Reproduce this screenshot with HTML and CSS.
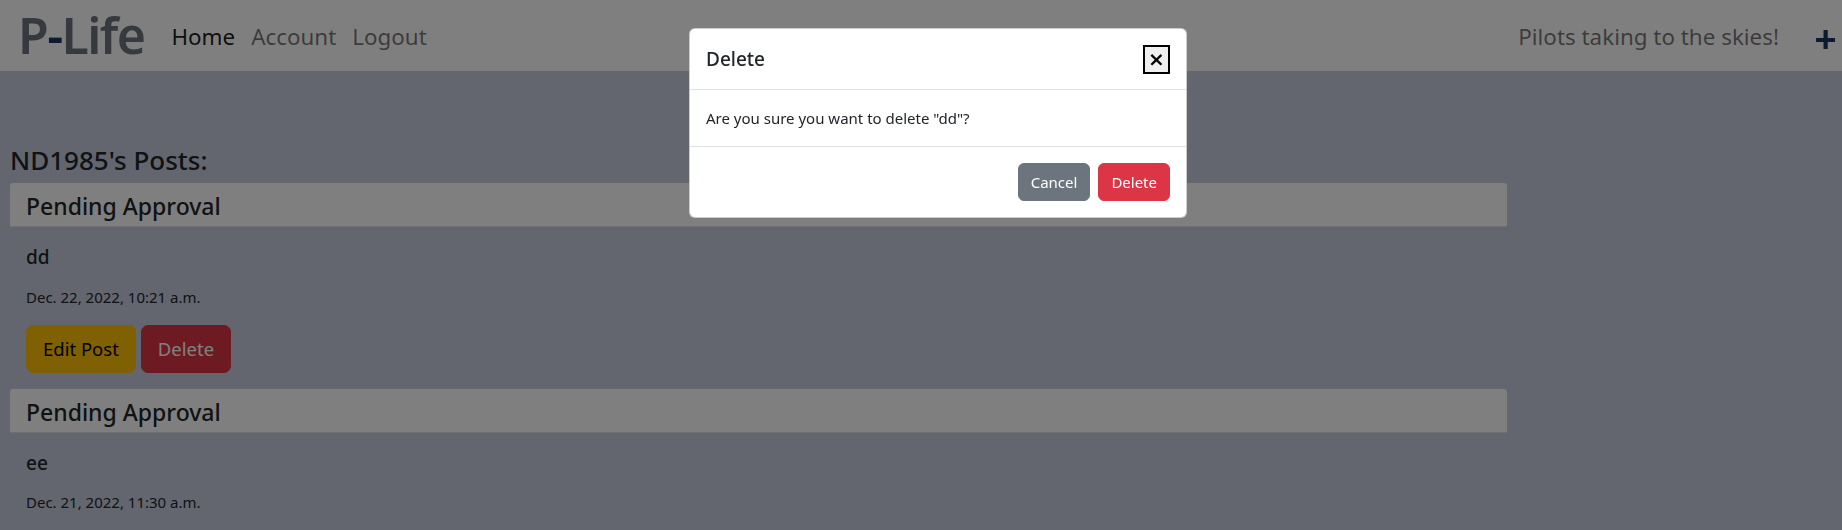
FILE: index.html
```html
<!DOCTYPE html>
<html lang="en">
<head>
<meta charset="utf-8">
<title>P-Life</title>
<link rel="stylesheet" href="styles.css">
</head>
<body>
<nav class="navbar">
  <a class="brand" href="#">P<span class="dash">-</span>Life</a>
  <ul class="nav">
    <li><a class="nav-link active" href="#">Home</a></li>
    <li><a class="nav-link" href="#">Account</a></li>
    <li><a class="nav-link" href="#">Logout</a></li>
  </ul>
  <span class="tagline">Pilots taking to the skies!</span>
  <a class="add" href="#" aria-label="New post">
    <svg width="19" height="19" viewBox="0 0 19 19"><rect x="0" y="8" width="19" height="4" fill="currentColor"/><rect x="7.5" y="0" width="4.2" height="19" fill="currentColor"/></svg>
  </a>
</nav>

<main class="content">
  <h3 class="posts-title">ND1985's Posts:</h3>

  <div class="card">
    <div class="card-header"><h4 class="status">Pending Approval</h4></div>
    <div class="card-body">
      <h5 class="post-title">dd</h5>
      <p class="post-date">Dec. 22, 2022, 10:21 a.m.</p>
      <div class="actions">
        <a class="btn btn-lg btn-warning" href="#">Edit Post</a>
        <a class="btn btn-lg btn-danger" href="#">Delete</a>
      </div>
    </div>
  </div>

  <div class="card">
    <div class="card-header"><h4 class="status">Pending Approval</h4></div>
    <div class="card-body">
      <h5 class="post-title">ee</h5>
      <p class="post-date">Dec. 21, 2022, 11:30 a.m.</p>
    </div>
  </div>
</main>

<div class="backdrop"></div>
<div class="modal">
  <div class="modal-dialog">
    <div class="modal-header">
      <h5 class="modal-title">Delete</h5>
      <button class="close" type="button" aria-label="Close">×</button>
    </div>
    <div class="modal-body">Are you sure you want to delete "dd"?</div>
    <div class="modal-footer">
      <button class="btn btn-secondary" type="button">Cancel</button>
      <button class="btn btn-danger" type="button">Delete</button>
    </div>
  </div>
</div>
</body>
</html>
```
FILE: styles.css
```css
* { box-sizing: border-box; }
html, body { margin: 0; padding: 0; }
body {
  font-family: "Noto Sans", "Open Sans", sans-serif;
  font-size: 15px;
  line-height: 24px;
  color: #212529;
  background: #c6ccde;
  overflow: hidden;
  height: 530px;
}
a { text-decoration: none; }

/* navbar */
.navbar {
  display: flex;
  align-items: flex-start;
  height: 71px;
  background: #ffffff;
  padding-left: 18px;
}
.brand {
  font-size: 50px;
  font-weight: 600;
  line-height: 60px;
  letter-spacing: -1.6px;
  padding-top: 5px;
  color: #6c757d;
}
.dash { color: #1a3660; }
.nav {
  display: flex;
  list-style: none;
  margin: 0 0 0 19px;
  padding: 0;
}
.nav-link {
  display: block;
  font-size: 22.4px;
  line-height: 33px;
  padding: 20px 8px 0;
  color: rgba(0, 0, 0, 0.55);
}
.nav-link.active { color: rgba(0, 0, 0, 0.9); }
.tagline {
  margin-left: auto;
  font-size: 22.4px;
  line-height: 33px;
  padding-top: 20px;
  color: rgba(0, 0, 0, 0.55);
}
.add {
  display: block;
  margin: 30px 7px 0 37px;
  color: #1a3660;
  line-height: 0;
}

/* content */
.content { padding: 74px 10px 0; }
.posts-title {
  margin: 0 0 6.5px;
  font-size: 26px;
  font-weight: 500;
  line-height: 1.2;
}
.card { width: 1497px; }
.card-header {
  background: #ffffff;
  padding: 10px 16px 6px;
  border-bottom: 1px solid rgba(0, 0, 0, 0.12);
  border-radius: 3px 3px 0 0;
}
.status {
  margin: 0;
  font-size: 23px;
  font-weight: 500;
  line-height: 1.2;
}
.card-body { padding: 19px 16px 16px; }
.post-title {
  margin: 0 0 15.5px;
  font-size: 19px;
  font-weight: 500;
  line-height: 1.2;
}
.post-date {
  margin: 0 0 16px;
  font-size: 15px;
  line-height: 24px;
}
.actions { display: flex; gap: 5px; }

/* buttons */
.btn {
  display: inline-block;
  font-family: inherit;
  font-size: 15px;
  line-height: 24px;
  padding: 6px 12px;
  border: 1px solid transparent;
  border-radius: 6px;
  cursor: pointer;
}
.btn-lg {
  font-size: 18.5px;
  line-height: 30px;
  padding: 8px 16px;
  border-radius: 7px;
}
.btn-warning { background: #ffc107; border-color: #ffc107; color: #000; }
.btn-danger { background: #dc3545; border-color: #dc3545; color: #fff; }
.btn-secondary { background: #6c757d; border-color: #6c757d; color: #fff; }

/* modal */
.backdrop {
  position: fixed;
  inset: 0;
  background: rgba(0, 0, 0, 0.5);
}
.modal {
  position: fixed;
  inset: 0;
}
.modal-dialog {
  width: 498px;
  margin: 28px 0 0 689px;
  background: #fff;
  border: 1px solid rgba(0, 0, 0, 0.2);
  border-radius: 6px;
}
.modal-header {
  display: flex;
  align-items: center;
  justify-content: space-between;
  padding: 15px 16px;
  border-bottom: 1px solid #dee2e6;
}
.modal-title {
  margin: 0;
  font-size: 19px;
  font-weight: 500;
  line-height: 30px;
}
.close {
  width: 27px;
  height: 29px;
  padding: 0;
  border: 2px solid #000;
  background: #efefef;
  font-family: "DejaVu Sans", sans-serif;
  font-weight: 700;
  font-size: 20px;
  line-height: 23px;
  color: #000;
}
.modal-body {
  padding: 16px;
  font-size: 15px;
  line-height: 24px;
}
.modal-footer {
  display: flex;
  justify-content: flex-end;
  gap: 8px;
  padding: 16px;
  border-top: 1px solid #dee2e6;
}
```
